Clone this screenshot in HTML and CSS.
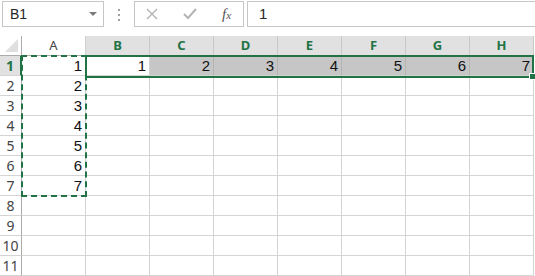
FILE: index.html
```html
<!DOCTYPE html>
<html lang="en">
<head>
    <meta charset="UTF-8">
    <title>Sheet</title>
    <link rel="stylesheet" href="styles.css">
</head>
<body>
    <div class="formula-bar">
        <div class="name-box">
            <span>B1</span>
            <span class="caret"></span>
        </div>
        <div class="dots"><i></i><i></i><i></i></div>
        <div class="fx-buttons">
            <svg width="12" height="12" viewBox="0 0 12 12"><path d="M1 1 L11 11 M11 1 L1 11" stroke="#b4b4b4" stroke-width="1.4" fill="none"/></svg>
            <svg width="14" height="12" viewBox="0 0 14 12"><path d="M1 6 L5 10 L13 1" stroke="#b4b4b4" stroke-width="2" fill="none"/></svg>
            <span class="fx">f<sub>x</sub></span>
        </div>
        <div class="formula-input">1</div>
    </div>

    <div class="sheet">
        <div class="grid">
            <div class="corner"><span class="tri"></span></div>
            <div class="col-head">A</div>
            <div class="col-head sel">B</div>
            <div class="col-head sel">C</div>
            <div class="col-head sel">D</div>
            <div class="col-head sel">E</div>
            <div class="col-head sel">F</div>
            <div class="col-head sel">G</div>
            <div class="col-head sel">H</div>

            <div class="row-head sel">1</div>
            <div class="cell">1</div>
            <div class="cell">1</div>
            <div class="cell hl">2</div>
            <div class="cell hl">3</div>
            <div class="cell hl">4</div>
            <div class="cell hl">5</div>
            <div class="cell hl">6</div>
            <div class="cell hl">7</div>
        </div>
        <div class="grid" id="rows"></div>

        <div class="marquee"></div>
        <div class="selection"><span class="handle"></span></div>
    </div>

    <script>
        const rows = document.getElementById('rows');
        const colA = [2, 3, 4, 5, 6, 7];
        for (let r = 2; r <= 11; r++) {
            let html = '<div class="row-head">' + r + '</div>';
            html += '<div class="cell">' + (colA[r - 2] || '') + '</div>';
            for (let c = 0; c < 7; c++) {
                html += '<div class="cell"></div>';
            }
            rows.insertAdjacentHTML('beforeend', html);
        }
    </script>
</body>
</html>
```

FILE: styles.css
```css
body {
    margin: 0;
    background-color: #fff;
    font-family: 'Liberation Sans', Arial, sans-serif;
    overflow: hidden;
}

.formula-bar {
    display: flex;
    height: 28px;
    padding: 1px 0 0 2px;
    box-sizing: border-box;
}

.name-box {
    width: 102px;
    height: 26px;
    box-sizing: border-box;
    border: 1px solid #c6c6c6;
    display: flex;
    align-items: center;
    justify-content: space-between;
    padding: 0 6px 0 7px;
    font-size: 14px;
    color: #262626;
}

.caret {
    width: 0;
    height: 0;
    border-left: 4px solid transparent;
    border-right: 4px solid transparent;
    border-top: 4px solid #7a7a7a;
}

.dots {
    width: 30px;
    display: flex;
    flex-direction: column;
    align-items: center;
    justify-content: center;
    gap: 3px;
}

.dots i {
    width: 2px;
    height: 2px;
    background-color: #a0a0a0;
}

.fx-buttons {
    width: 110px;
    height: 26px;
    box-sizing: border-box;
    border: 1px solid #c6c6c6;
    display: flex;
    align-items: center;
    padding: 0 0 0 11px;
    gap: 25px;
}

.fx {
    font-family: 'Liberation Serif', 'Times New Roman', serif;
    font-style: italic;
    font-size: 15px;
    color: #555;
}

.fx sub {
    font-size: 11px;
    vertical-align: 0;
}

.formula-input {
    flex: 1;
    height: 26px;
    box-sizing: border-box;
    border: 1px solid #c6c6c6;
    border-right: none;
    margin-left: 3px;
    padding-left: 11px;
    font-size: 15px;
    line-height: 24px;
    color: #262626;
}

.sheet {
    position: relative;
    margin-top: 8px;
}

.grid {
    display: grid;
    grid-template-columns: 22px repeat(8, 64px);
    grid-auto-rows: 20px;
}

.corner,
.col-head,
.row-head,
.cell {
    box-sizing: border-box;
    border-right: 1px solid #d4d4d4;
    border-bottom: 1px solid #d4d4d4;
}

.corner {
    position: relative;
    border-bottom-color: #ababab;
    border-right-color: #ababab;
}

.tri {
    position: absolute;
    right: 3px;
    bottom: 3px;
    width: 0;
    height: 0;
    border-left: 13px solid transparent;
    border-bottom: 13px solid #dfdfdf;
}

.col-head {
    font-family: 'Noto Sans', 'Open Sans', sans-serif;
    font-size: 13px;
    color: #444;
    text-align: center;
    line-height: 19px;
    border-bottom-color: #ababab;
    border-right-color: #d0d0d0;
}

.col-head.sel {
    background-color: #e1e1e1;
    color: #217346;
    font-weight: bold;
    border-right-color: #c8c8c8;
}

.row-head {
    font-family: 'Noto Sans', 'Open Sans', sans-serif;
    font-size: 14px;
    color: #444;
    text-align: center;
    line-height: 19px;
    border-right-color: #ababab;
}

.row-head.sel {
    background-color: #e1e1e1;
    color: #217346;
    font-weight: bold;
    border-right: 2px solid #217346;
}

.cell {
    font-size: 15px;
    color: #111;
    text-align: right;
    padding-right: 3px;
    line-height: 20px;
}

.cell.hl {
    background-color: #c6c6c6;
    border-right-color: #b4b4b4;
}

.marquee {
    position: absolute;
    left: 21px;
    top: 19px;
    width: 66px;
    height: 142px;
    box-sizing: border-box;
    border: 2px dashed #217346;
}

.selection {
    position: absolute;
    left: 85px;
    top: 19px;
    width: 449px;
    height: 23px;
    box-sizing: border-box;
    border: 2px solid #217346;
}

.handle {
    position: absolute;
    right: -4px;
    bottom: -4px;
    width: 5px;
    height: 5px;
    background-color: #217346;
    border: 1px solid #fff;
}
```
